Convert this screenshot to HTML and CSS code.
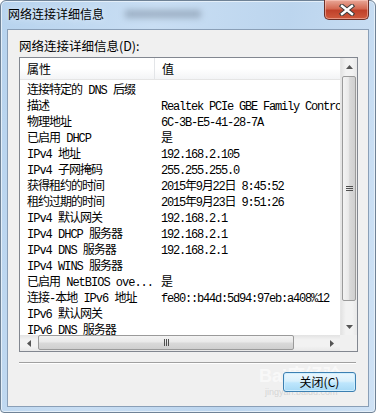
FILE: index.html
```html
<!DOCTYPE html>
<html lang="zh-CN">
<head>
    <meta charset="UTF-8">
    <title>网络连接详细信息</title>
    <link rel="stylesheet" href="styles.css">
</head>
<body>
    <div class="window">
        <div class="titlebar">
            <span class="title">网络连接详细信息</span>
            <span class="smudge"></span>
            <button class="close" aria-label="关闭">
                <svg width="18" height="12" viewBox="0 0 18 12">
                    <path d="M4 2 L14 10 M14 2 L4 10" stroke="#3b3b3b" stroke-width="4.4" stroke-linecap="square"/>
                    <path d="M4 2 L14 10 M14 2 L4 10" stroke="#ffffff" stroke-width="2.4" stroke-linecap="square"/>
                </svg>
            </button>
        </div>
        <div class="client">
            <div class="label">网络连接详细信息(D):</div>
            <div class="listbox">
                <div class="view">
                    <div class="header">
                        <div class="col first">属性</div>
                        <div class="col">值</div>
                    </div>
                    <div class="rows">
                        <div class="row"><span class="key">连接特定的 DNS 后缀</span><span class="val"></span></div>
                        <div class="row"><span class="key">描述</span><span class="val">Realtek PCIe GBE Family Controller</span></div>
                        <div class="row"><span class="key">物理地址</span><span class="val">6C-3B-E5-41-28-7A</span></div>
                        <div class="row"><span class="key">已启用 DHCP</span><span class="val">是</span></div>
                        <div class="row"><span class="key">IPv4 地址</span><span class="val">192.168.2.105</span></div>
                        <div class="row"><span class="key">IPv4 子网掩码</span><span class="val">255.255.255.0</span></div>
                        <div class="row"><span class="key">获得租约的时间</span><span class="val">2015年9月22日 8:45:52</span></div>
                        <div class="row"><span class="key">租约过期的时间</span><span class="val">2015年9月23日 9:51:26</span></div>
                        <div class="row"><span class="key">IPv4 默认网关</span><span class="val">192.168.2.1</span></div>
                        <div class="row"><span class="key">IPv4 DHCP 服务器</span><span class="val">192.168.2.1</span></div>
                        <div class="row"><span class="key">IPv4 DNS 服务器</span><span class="val">192.168.2.1</span></div>
                        <div class="row"><span class="key">IPv4 WINS 服务器</span><span class="val"></span></div>
                        <div class="row"><span class="key">已启用 NetBIOS ove...</span><span class="val">是</span></div>
                        <div class="row"><span class="key">连接-本地 IPv6 地址</span><span class="val">fe80::b44d:5d94:97eb:a408%12</span></div>
                        <div class="row"><span class="key">IPv6 默认网关</span><span class="val"></span></div>
                        <div class="row"><span class="key">IPv6 DNS 服务器</span><span class="val"></span></div>
                    </div>
                </div>
                <div class="vscroll">
                    <div class="arrow">
                        <svg width="7" height="4" viewBox="0 0 7 4"><polygon points="0,4 7,4 3.5,0" fill="#555"/></svg>
                    </div>
                    <div class="track">
                        <div class="thumb"><span class="grip"></span></div>
                    </div>
                    <div class="arrow">
                        <svg width="7" height="4" viewBox="0 0 7 4"><polygon points="0,0 7,0 3.5,4" fill="#555"/></svg>
                    </div>
                </div>
                <div class="hscroll">
                    <div class="arrow">
                        <svg width="4" height="7" viewBox="0 0 4 7"><polygon points="4,0 4,7 0,3.5" fill="#555"/></svg>
                    </div>
                    <div class="track">
                        <div class="thumb"><span class="grip"></span></div>
                    </div>
                    <div class="arrow">
                        <svg width="4" height="7" viewBox="0 0 4 7"><polygon points="0,0 0,7 4,3.5" fill="#555"/></svg>
                    </div>
                </div>
                <div class="corner"></div>
            </div>
            <div class="sep"></div>
            <div class="actions">
                <span class="watermark">Bai度经验<small>jingyan.baidu.com</small></span>
                <button class="btn">关闭(C)</button>
            </div>
        </div>
    </div>
</body>
</html>
```

FILE: styles.css
```css
body {
    margin: 0;
    width: 376px;
    height: 413px;
    overflow: hidden;
    font-family: "Noto Sans CJK SC", "Liberation Sans", sans-serif;
}

.window {
    box-sizing: border-box;
    width: 376px;
    height: 413px;
    display: flex;
    flex-direction: column;
    border: 1px solid #6f8296;
    border-radius: 6px 6px 4px 4px;
    background: linear-gradient(100deg, #b7d3ee 0%, #c9def3 35%, #bcd5ee 65%, #cfe2f5 100%);
    box-shadow: inset 0 0 0 1px #e4eff9;
}

.titlebar {
    height: 28px;
    display: flex;
    align-items: flex-start;
    position: relative;
}

.title {
    font-size: 12px;
    line-height: 14px;
    margin: 6px 0 0 7px;
    color: #000;
    text-shadow: 0 0 6px #e8f2fb;
}

.smudge {
    position: absolute;
    left: 124px;
    top: 9px;
    width: 76px;
    height: 8px;
    background: #8a9cb0;
    filter: blur(3px);
    opacity: 0.7;
}

.close {
    margin: -1px 6px 0 auto;
    width: 45px;
    height: 20px;
    padding: 0;
    border: 1px solid #6b2f27;
    border-top: none;
    border-radius: 0 0 5px 5px;
    background: linear-gradient(#e9a898 0%, #d46a53 45%, #c0412a 55%, #cf5a3d 100%);
    box-shadow: inset 0 0 0 1px rgba(255, 210, 200, 0.5);
    display: flex;
    align-items: center;
    justify-content: center;
}

.client {
    box-sizing: border-box;
    flex: 1;
    margin: 0 6px 5px 6px;
    border: 1px solid #8a9fb7;
    background: #f0f0f0;
    padding: 9px 10px 0 11px;
    display: flex;
    flex-direction: column;
}

.label {
    font-size: 12.5px;
    line-height: 14px;
    margin-bottom: 4px;
    color: #000;
}

.listbox {
    box-sizing: border-box;
    width: 339px;
    height: 295px;
    border: 1px solid #828790;
    background: #fff;
    display: grid;
    grid-template-columns: 1fr 17px;
    grid-template-rows: 1fr 16px;
}

.view {
    overflow: hidden;
    min-width: 0;
}

.header {
    height: 22px;
    display: flex;
    background: linear-gradient(#ffffff 0%, #ffffff 50%, #f3f4f6 100%);
    border-bottom: 1px solid #e5e5e5;
    box-sizing: border-box;
}

.header .col {
    font-size: 12px;
    line-height: 22px;
    padding-left: 7px;
    color: #000;
}

.header .first {
    width: 127px;
    border-right: 1px solid #e3e5e8;
}

.rows {
    padding-top: 3px;
}

.row {
    display: flex;
    height: 16px;
    line-height: 16px;
    white-space: nowrap;
    font-family: "Liberation Mono", "Noto Sans CJK SC", monospace;
    font-size: 12px;
    color: #000;
}

.key {
    width: 134px;
    flex: none;
    padding-left: 7px;
    letter-spacing: -1px;
}

.val {
    letter-spacing: -1.2px;
}

.vscroll {
    display: flex;
    flex-direction: column;
    background: linear-gradient(90deg, #e3e3e3, #f2f2f2 30%, #f2f2f2 70%, #e8e8e8);
    border-left: 1px solid #e6e6e6;
}

.vscroll .arrow {
    height: 17px;
    display: flex;
    align-items: center;
    justify-content: center;
}

.vscroll .track {
    flex: 1;
    padding-top: 1px;
}

.vscroll .thumb {
    box-sizing: border-box;
    height: 225px;
    margin: 0 1px;
    border: 1px solid #9a9a9a;
    border-radius: 2px;
    background: linear-gradient(90deg, #f3f3f3, #e9e9e9 45%, #d9d9d9 55%, #cfcfcf);
    display: flex;
    align-items: center;
    justify-content: center;
}

.vscroll .grip {
    width: 7px;
    height: 5px;
    background: repeating-linear-gradient(#4f4f4f 0 1px, transparent 1px 2px);
}

.hscroll {
    display: flex;
    background: linear-gradient(#e3e3e3, #f2f2f2 30%, #f2f2f2 70%, #e8e8e8);
}

.hscroll .arrow {
    width: 17px;
    display: flex;
    align-items: center;
    justify-content: center;
}

.hscroll .track {
    flex: 1;
    padding-left: 1px;
}

.hscroll .thumb {
    box-sizing: border-box;
    width: 256px;
    height: 15px;
    border: 1px solid #9a9a9a;
    border-radius: 2px;
    background: linear-gradient(#f3f3f3, #e9e9e9 45%, #d9d9d9 55%, #cfcfcf);
    display: flex;
    align-items: center;
    justify-content: center;
}

.hscroll .grip {
    width: 5px;
    height: 7px;
    background: repeating-linear-gradient(90deg, #4f4f4f 0 1px, transparent 1px 2px);
}

.corner {
    background: #f0f0f0;
}

.sep {
    width: 337px;
    height: 1px;
    margin-top: 10px;
    background: #a0a0a0;
    box-shadow: 0 1px 0 #ffffff;
}

.actions {
    display: flex;
    justify-content: flex-end;
    padding: 9px 2px 0 0;
    position: relative;
}

.btn {
    position: relative;
    width: 73px;
    height: 20px;
    padding: 0;
    border: 1px solid #3c7fb1;
    border-radius: 3px;
    background: linear-gradient(#eaf6fd 0%, #d9f0fc 45%, #bee6fd 55%, #a7d9f5 100%);
    box-shadow: inset 0 0 0 1px #cfeefe;
    font-family: "Noto Sans CJK SC", sans-serif;
    font-size: 12px;
    line-height: 16px;
    color: #000;
}

.watermark {
    position: absolute;
    left: 240px;
    top: 5px;
    font-family: "Liberation Sans", "Noto Sans CJK SC", sans-serif;
    font-size: 18px;
    font-weight: bold;
    line-height: 16px;
    color: rgba(255, 255, 255, 0.6);
    pointer-events: none;
}

.watermark small {
    display: block;
    font-size: 9px;
    line-height: 12px;
    font-weight: normal;
    margin: 2px 0 0 6px;
    color: rgba(200, 200, 200, 0.7);
}
```
